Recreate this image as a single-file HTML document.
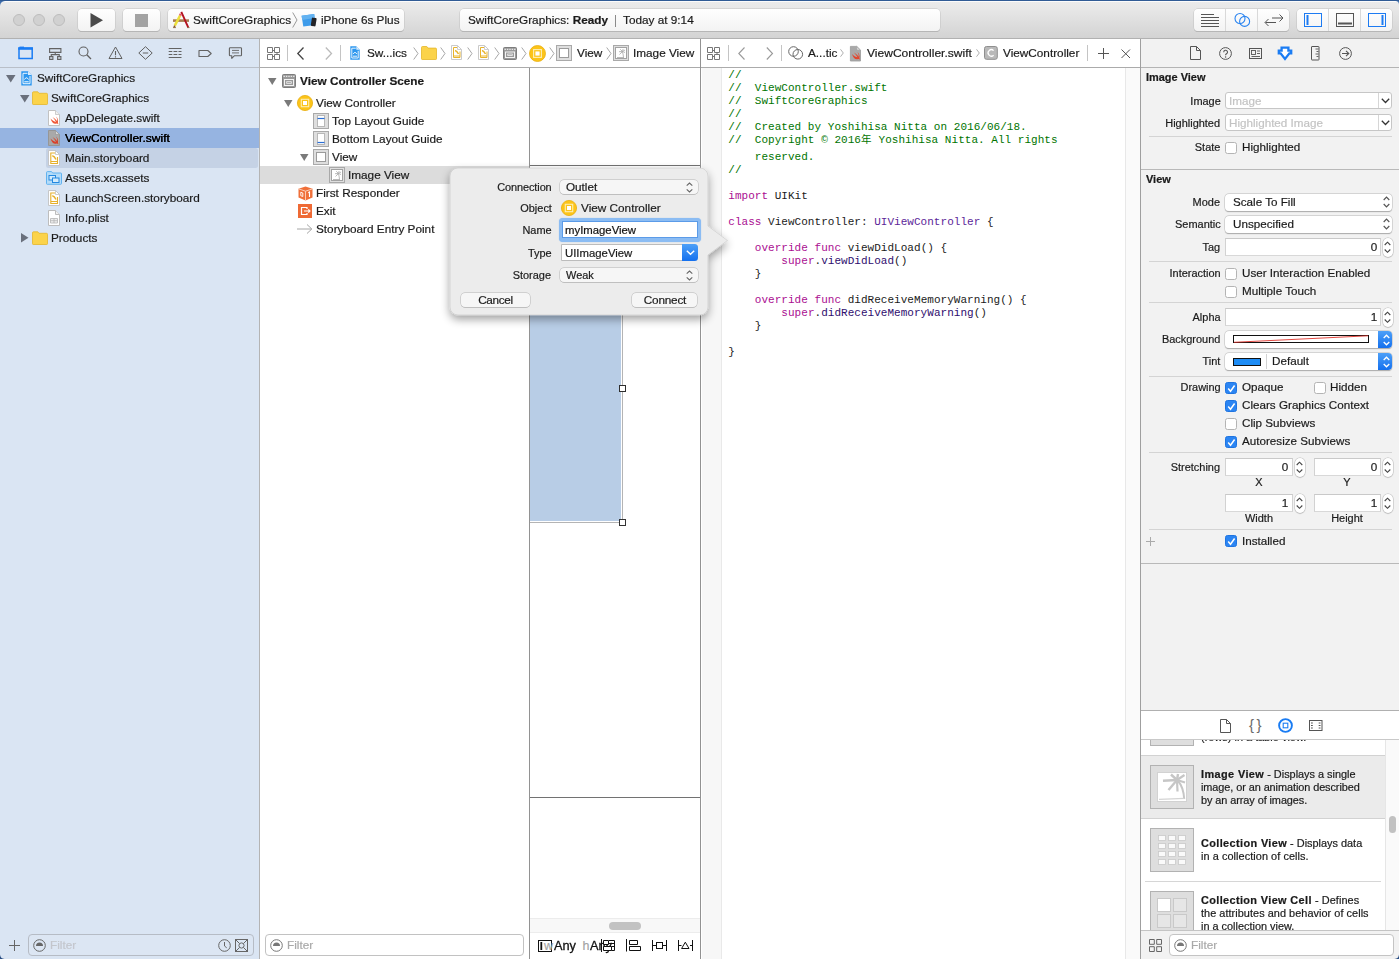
<!DOCTYPE html>
<html><head><meta charset="utf-8"><title>Xcode</title>
<style>
*{box-sizing:border-box;margin:0;padding:0}
html,body{width:1399px;height:959px;overflow:hidden;background:#fff}
body{font-family:"Liberation Sans","Noto Sans CJK JP",sans-serif;font-size:12px;color:#1a1a1a;position:relative}
.abs,.abs>*{position:absolute}
.t{position:absolute;white-space:pre;line-height:14px;height:14px;font-size:11px;letter-spacing:0;transform:scaleX(1.07);transform-origin:0 50%;-webkit-text-stroke:.18px}
.t.r{transform-origin:100% 50%}.t.ctr{transform-origin:50% 50%}
.b{font-weight:700;-webkit-text-stroke:.2px}
svg{position:absolute;overflow:visible}
/* title bar */
#title{position:absolute;left:0;top:0;width:1399px;height:39px;background:linear-gradient(#305b95 0,#305b95 1px,#fbfbfb 1px,#fbfbfb 2px,#ebebeb 2px,#e7e7e7 9px,#d3d3d3 38px,#b1b1b1 38px);}
.tbtn{position:absolute;top:9px;height:22px;border-radius:4px;background:linear-gradient(#fefefe,#f3f3f3);box-shadow:0 0 0 .5px #c2c2c2,0 1px 0 0 #aaa}
.light{position:absolute;top:14px;width:12px;height:12px;border-radius:6px;background:#d1d1d1;border:1px solid #bdbdbd}
/* panes */
#nav{position:absolute;left:0;top:39px;width:259px;height:920px;background:#dae5f3}
#navline{position:absolute;left:259px;top:39px;width:1px;height:920px;background:#b4b4b4}
.hline{position:absolute;height:1px;background:#c4c4c4}
.vline{position:absolute;width:1px;background:#c4c4c4}
#outline{position:absolute;left:260px;top:39px;width:269px;height:920px;background:#fff}
#canvas{position:absolute;left:529px;top:39px;width:172px;height:920px;background:#fff}
#editor{position:absolute;left:701px;top:39px;width:440px;height:920px;background:#fff}
#insp{position:absolute;left:1141px;top:39px;width:258px;height:920px;background:#f2f2f2}
.code{font-family:"Liberation Mono","Noto Sans CJK JP",monospace;font-size:11px;letter-spacing:.03px}
.c{color:#007400}.k{color:#aa0d91}.p{color:#5c2699}.m{color:#2e0d6e}

.t.l11{font-size:10px;transform:scaleX(1.095)}.t.l11.lib{transform:scaleX(1.09)}
.t.l12{font-size:11px;transform:scaleX(1.06)}
.cb{position:absolute;width:12px;height:12px;border-radius:2.500px;background:#fff;border:1px solid #b4b4b4}
.cb.on{background:#2b85f3;border-color:#1f74e0}
.fld{position:absolute;background:#fff;border:1px solid #c6c6c6;border-radius:3px}
.fld.sq{border-radius:0;border-color:#c9c9c9 #d2d2d2 #d8d8d8 #d2d2d2}
.pop{position:absolute;background:#fff;border-radius:4px;box-shadow:0 0 0 .5px #c0c0c0,0 .5px 1px 0 #999}
.stp{position:absolute;width:10px;height:19px;border-radius:5px;background:#fff;box-shadow:0 0 0 .5px #bdbdbd,0 .5px 1px 0 #999}
.bluebtn{position:absolute;border-radius:0 4px 4px 0;background:linear-gradient(#4da0f8,#1470ee)}

.lib{line-height:13px;height:auto;white-space:pre;letter-spacing:0}
.pop.g{background:#f6f6f6;box-shadow:0 0 0 .5px #b4b4b4,0 .5px .5px 0 #aaa}
</style></head><body>
<div id="title"></div>
<div id="nav"></div><div id="navline"></div>
<div id="outline"></div>
<div id="canvas"></div>
<div id="editor"></div>
<div id="insp"></div>
<!--TITLEBAR-->
<div class="light" style="left:13px"></div><div class="light" style="left:33px"></div><div class="light" style="left:53px"></div>
<div class="tbtn" style="left:78px;width:37px"></div>
<svg style="left:90px;top:13px" width="14" height="15"><path d="M0.5 0 L13 7.3 L0.5 14.6Z" fill="#4a4a4a"/></svg>
<div class="tbtn" style="left:123px;width:37px"></div>
<div style="position:absolute;left:135px;top:14px;width:13px;height:13px;background:#a3a3a3"></div>
<div class="tbtn" style="left:168px;width:236px"></div>
<!-- xcode app icon -->
<svg style="left:172px;top:11px" width="18" height="18" viewBox="0 0 18 18">
<path d="M1 9.600h16" stroke="#a97d50" stroke-width="2.600"/>
<path d="M9.300 .8L16.300 16.700" stroke="#b3121f" stroke-width="1.900" fill="none"/>
<path d="M8.200 4.300L2.800 14.600" stroke="#ecdf3c" stroke-width="2.500"/>
<path d="M8.900 2.900L8.100 4.500" stroke="#e0566a" stroke-width="2.500"/>
<path d="M2.800 14.600L2 16.500" stroke="#8a5a2c" stroke-width="1.600"/>
<path d="M1 16.600h3M15 16.600h2.500" stroke="#8e6a45" stroke-width=".9"/>
</svg>
<div class="t" style="left:193px;top:13px">SwiftCoreGraphics</div>
<svg style="left:292px;top:12px" width="6" height="16"><path d="M0.7 0.5 L5 8 L0.7 15.5" stroke="#9a9a9a" fill="none" stroke-width="1"/></svg>
<!-- simulator icon -->
<svg style="left:301px;top:12px" width="17" height="16" viewBox="0 0 17 16">
<path d="M.6 3.700L13.200 2L14.300 12.900L2.300 14.600Z" fill="#3d9bea"/><path d="M.6 3.700L13.200 2L13.600 6L1.200 8Z" fill="#62b2f1"/>
<rect x="10.300" y="5.800" width="4.800" height="8.400" rx="1" fill="#222226" transform="rotate(9 12.700 10)"/>
</svg>
<div class="t" style="left:321px;top:13px">iPhone 6s Plus</div>
<div class="tbtn" style="left:460px;width:480px"></div>
<div class="t" style="left:468px;top:13px">SwiftCoreGraphics: <span class="b">Ready</span></div>
<div style="position:absolute;left:615px;top:15px;width:1px;height:12px;background:#8a8a8a"></div>
<div class="t" style="left:623px;top:13px">Today at 9:14</div>
<!-- right segmented groups -->
<div class="tbtn" style="left:1194px;width:95px"></div>
<div style="position:absolute;left:1225px;top:9px;width:1px;height:22px;background:#d9d9d9"></div>
<div style="position:absolute;left:1257px;top:9px;width:1px;height:22px;background:#d9d9d9"></div>
<svg style="left:1200px;top:12px" width="20" height="16"><path d="M1 2.5h13M1 5.5h18M1 8.5h18M1 11.5h18M1 14.5h18" stroke="#555" stroke-width="1"/></svg>
<svg style="left:1232px;top:12px" width="20" height="16"><circle cx="8" cy="6.5" r="5" fill="none" stroke="#2a84f0" stroke-width="1.1"/><circle cx="12.6" cy="9.4" r="5" fill="none" stroke="#2a84f0" stroke-width="1.1"/></svg>
<svg style="left:1263px;top:12px" width="22" height="16"><path d="M9 6H19.5M16.5 2.5L20 6L16.5 9.5" stroke="#555" fill="none" stroke-width="1"/><path d="M13 10.5H2.5M5.5 7L2 10.5L5.5 14" stroke="#555" fill="none" stroke-width="1"/></svg>
<div class="tbtn" style="left:1297px;width:95px"></div>
<div style="position:absolute;left:1328px;top:9px;width:1px;height:22px;background:#d9d9d9"></div>
<div style="position:absolute;left:1360px;top:9px;width:1px;height:22px;background:#d9d9d9"></div>
<svg style="left:1304px;top:13px" width="18" height="14"><rect x=".5" y=".5" width="17" height="13" fill="none" stroke="#1d7bf2"/><path d="M3.5 2v10" stroke="#1d7bf2" stroke-width="2"/></svg>
<svg style="left:1336px;top:13px" width="18" height="14"><rect x=".5" y=".5" width="17" height="13" fill="none" stroke="#555"/><path d="M2 10.5h14" stroke="#555" stroke-width="2"/></svg>
<svg style="left:1368px;top:13px" width="18" height="14"><rect x=".5" y=".5" width="17" height="13" fill="none" stroke="#1d7bf2"/><path d="M14.5 2v10" stroke="#1d7bf2" stroke-width="2"/></svg>
<!--/TITLEBAR-->
<!--NAV-->
<!-- nav icon bar -->
<div class="hline" style="left:0;top:67px;width:259px;background:#b9bfc8"></div>
<svg style="left:18px;top:46px" width="16" height="14"><path d="M1 2v10.500h13.200V2z" fill="none" stroke="#1a7cf3" stroke-width="1.500"/><path d="M.3 1.500h14.600v2.300H.3z" fill="#1a7cf3"/><path d="M1.500 .6h4.500v1.500h-4.500z" fill="#1a7cf3"/></svg>
<svg style="left:48px;top:47px" width="15" height="13"><path d="M1.600 1.600h11.300v3.800H1.600zM1.600 9.600h3.300v2.800H1.600zM9.600 9.600h3.300v2.800H9.600zM7.250 5.400v2.300M3.250 9.600v-2h8v2" fill="none" stroke="#636363" stroke-width="1.100"/></svg>
<svg style="left:78px;top:46px" width="14" height="14"><circle cx="5.500" cy="5.500" r="4.500" fill="none" stroke="#606060" stroke-width="1.100"/><path d="M8.800 8.800L13 13" stroke="#606060" stroke-width="1.300"/></svg>
<svg style="left:108px;top:46px" width="15" height="14"><path d="M7.500 1L14 12.500H1z" fill="none" stroke="#606060" stroke-linejoin="round"/><path d="M7.500 5v4.200M7.500 10.200v1.300" stroke="#606060" stroke-width="1.100"/></svg>
<svg style="left:138px;top:46px" width="15" height="14"><path d="M7.500 .7L14.200 7L7.500 13.300L.8 7z" fill="none" stroke="#606060" stroke-linejoin="round"/><path d="M4.800 7h5.400" stroke="#606060"/></svg>
<svg style="left:168px;top:47px" width="15" height="12"><path d="M.7 1.500h12.800M.7 10.500h12.800M.7 4.500h3.600M5.500 4.500h3.800M10.500 4.500h3M.7 7.500h3.600M5.500 7.500h3.800M10.500 7.500h3" stroke="#636363" stroke-width="1"/></svg>
<svg style="left:198px;top:49px" width="15" height="9"><path d="M1 1.500h8.800l3.400 3l-3.400 3H1z" fill="none" stroke="#636363" stroke-width="1.100" stroke-linejoin="round"/></svg>
<svg style="left:228px;top:46px" width="15" height="14"><path d="M2.200 1.700h10.500q.8 0 .8.800v6.400q0 .8-.8.800H6.500L3.800 12.300V9.700H2.200q-.8 0-.8-.8V2.500q0-.8.800-.8z" fill="none" stroke="#636363" stroke-width="1.100" stroke-linejoin="round"/><path d="M4 4.400h7M4 6.900h7" stroke="#636363" stroke-width=".9"/></svg>
<!-- rows -->
<div style="position:absolute;left:0;top:128px;width:259px;height:20px;background:#96b4e1"></div>
<div style="position:absolute;left:46px;top:148px;width:212px;height:20px;background:#c5d2e5;border-radius:2.500px"></div>
<svg style="left:6px;top:75px" width="10" height="8"><path d="M0 0h9.500L4.750 7.500z" fill="#6a707c"/></svg>
<svg style="left:20px;top:95px" width="10" height="8"><path d="M0 0h9.500L4.750 7.500z" fill="#6a707c"/></svg>
<svg style="left:21px;top:233px" width="8" height="10"><path d="M0 0v9.500L7.500 4.750z" fill="#6a707c"/></svg>
<!-- project icon -->
<svg style="left:20.500px;top:71px" width="11" height="15"><path d="M.3.300h6.700l3.700 3.700v10.500H.3z" fill="#2c97ef"/><path d="M7 .3v3.700h3.700z" fill="#d9ecfc"/><path d="M2 2.300h4.500M2 2.300v10.400h7V5" fill="none" stroke="#fff" stroke-width=".9"/><path d="M3.500 8.500q2-3.500 4 0M3.300 10.800h4.400" fill="none" stroke="#fff" stroke-width="1"/></svg>
<!-- folders -->
<svg style="left:32px;top:91px" width="16" height="14"><path d="M.5 1.800q0-1 1-1h4.300l1.200 1.500h7.500q1 0 1 1v9.500q0 .7-.7.700H1.200q-.7 0-.7-.7z" fill="#fbd34a" stroke="#e4b62a" stroke-width=".8"/></svg>
<svg style="left:32px;top:231px" width="16" height="14"><path d="M.5 1.800q0-1 1-1h4.300l1.200 1.500h7.500q1 0 1 1v9.500q0 .7-.7.700H1.200q-.7 0-.7-.7z" fill="#fbd34a" stroke="#e4b62a" stroke-width=".8"/></svg>
<!-- swift files -->
<svg style="left:48px;top:110px" width="12" height="16"><path d="M.5.500h7l4 4v11H.5z" fill="#fff" stroke="#c2c2c2"/><path d="M7.500.5v4h4" fill="#f1f1f1" stroke="#c2c2c2" stroke-width=".8"/><path d="M2.300 8.200C4 10 6 11.200 7.800 11.600C7 10 5.800 8.400 4.300 6.800C6.300 8 7.900 9.500 8.900 11C9.300 9.600 8.900 7.900 7.700 6.200C9.700 7.800 10.300 10.300 9.700 12.200C10.100 12.800 10.200 13.500 10 14.100C9.500 13.300 8.900 13.100 8.300 13.300C6.100 14.300 3.500 12.500 2.300 8.200Z" fill="#f05a3a" transform="translate(.2 .3)"/></svg>
<svg style="left:48px;top:130px" width="12" height="16"><path d="M.5.500h7l4 4v11H.5z" fill="#a9a9a9" stroke="#969696"/><path d="M7.500.5v4h4z" fill="#d6d6d6" stroke="#969696" stroke-width=".7"/><path d="M2.300 8.200C4 10 6 11.200 7.800 11.600C7 10 5.800 8.400 4.300 6.800C6.300 8 7.900 9.500 8.900 11C9.300 9.600 8.900 7.900 7.700 6.200C9.700 7.800 10.300 10.300 9.700 12.200C10.100 12.800 10.200 13.500 10 14.100C9.500 13.300 8.900 13.100 8.300 13.300C6.100 14.300 3.500 12.500 2.300 8.200Z" fill="#d9412a" transform="translate(.2 .3)"/></svg>
<!-- storyboards -->
<svg style="left:48px;top:150px" width="12" height="16"><path d="M.5.500h7l4 4v11H.5z" fill="#fff" stroke="#c2c2c2" stroke-width=".9"/><path d="M7.500.5v4h4" fill="none" stroke="#c2c2c2" stroke-width=".8"/><path d="M7 3H2.800v10.500h6.700V7M2.800 11.500h6.700" fill="none" stroke="#e6b02a" stroke-width="1.100"/><path d="M4.300 5.800q2.200.4 3.700 3.700" fill="none" stroke="#e6b02a" stroke-width="1.500"/></svg>
<svg style="left:48px;top:190px" width="12" height="16"><path d="M.5.500h7l4 4v11H.5z" fill="#fff" stroke="#c2c2c2" stroke-width=".9"/><path d="M7.500.5v4h4" fill="none" stroke="#c2c2c2" stroke-width=".8"/><path d="M7 3H2.800v10.500h6.700V7M2.800 11.500h6.700" fill="none" stroke="#e6b02a" stroke-width="1.100"/><path d="M4.300 5.800q2.200.4 3.700 3.700" fill="none" stroke="#e6b02a" stroke-width="1.500"/></svg>
<!-- assets -->
<svg style="left:46px;top:171px" width="16" height="14"><path d="M.5 1.600q0-1 1-1h4l1.200 1.400h8q.8 0 .8.800v9.700q0 .8-.8.800H1.300q-.8 0-.8-.8z" fill="#b4dcf9" stroke="#56adee" stroke-width=".9"/><rect x="3" y="4.500" width="6.500" height="4.500" fill="#d4ecfc" stroke="#2488e0" stroke-width="1"/><rect x="6.500" y="7" width="6.500" height="4.500" fill="#d4ecfc" stroke="#2488e0" stroke-width="1"/></svg>
<!-- plist -->
<svg style="left:48px;top:210px" width="12" height="16"><path d="M.5.500h7l4 4v11H.5z" fill="#fff" stroke="#bdbdbd"/><path d="M7.500.5v4h4" fill="#f2f2f2" stroke="#bdbdbd"/><path d="M2.500 8.500h7v4.500h-7zM2.500 10.700h7M6 8.500v4.500" fill="#eee" stroke="#b5b5b5" stroke-width=".8"/></svg>
<div class="t" style="left:37px;top:71px">SwiftCoreGraphics</div>
<div class="t" style="left:51px;top:91px">SwiftCoreGraphics</div>
<div class="t" style="left:65px;top:111px">AppDelegate.swift</div>
<div class="t" style="left:65px;top:131px;color:#000;text-shadow:0 0 .3px #000;transform:scaleX(1.095)">ViewController.swift</div>
<div class="t" style="left:65px;top:151px">Main.storyboard</div>
<div class="t" style="left:65px;top:171px">Assets.xcassets</div>
<div class="t" style="left:65px;top:191px">LaunchScreen.storyboard</div>
<div class="t" style="left:65px;top:211px">Info.plist</div>
<div class="t" style="left:51px;top:231px">Products</div>
<!-- bottom filter -->
<svg style="left:9px;top:940px" width="12" height="12"><path d="M5.500 0v11M0 5.500h11" stroke="#666" stroke-width="1"/></svg>
<div style="position:absolute;left:28px;top:934px;width:226px;height:22px;border:1px solid #b6bcc5;border-radius:4px;background:#dce6f3"></div>
<svg style="left:33px;top:939px" width="13" height="13"><circle cx="6.500" cy="6.500" r="5.800" fill="none" stroke="#666" stroke-width="1"/><path d="M3 7a3.500 3.500 0 0 1 7 0z" fill="#666"/></svg>
<div class="t" style="left:50px;top:938px;color:#c3c6cc">Filter</div>
<svg style="left:218px;top:939px" width="13" height="13"><circle cx="6.500" cy="6.500" r="5.800" fill="none" stroke="#666" stroke-width="1"/><path d="M6.500 3v4l2.200 1.800" fill="none" stroke="#666" stroke-width="1"/></svg>
<svg style="left:235px;top:939px" width="13" height="13"><rect x=".5" y=".5" width="12" height="12" fill="none" stroke="#666"/><circle cx="6.500" cy="6.500" r="2.600" fill="none" stroke="#666"/><path d="M1 1l3.500 3.500M12 1L8.500 4.500M1 12l3.500-3.500M12 12L8.500 8.500" stroke="#666"/></svg>
<!--/NAV-->
<!--OUTLINE-->
<!-- jump bar (storyboard) -->
<div class="hline" style="left:260px;top:67px;width:441px;background:#ababab"></div>
<div class="vline" style="left:529px;top:68px;height:891px;background:#929292"></div>
<div class="vline" style="left:700px;top:39px;height:920px;background:#929292"></div>
<svg style="left:267px;top:47px" width="13" height="13"><path d="M.5.500h5v5h-5zM7.500.5h5v5h-5zM.5 7.500h5v5h-5zM7.500 7.500h5v5h-5zM5.500 3.500h2M10 5.500v2M5.500 9.500h2" fill="none" stroke="#767676" stroke-width="1"/></svg>
<div class="vline" style="left:287px;top:45px;height:16px;background:#c4c4c4"></div>
<svg style="left:297px;top:47px" width="8" height="13"><path d="M6.500.5L.8 6.500L6.500 12.500" fill="none" stroke="#444" stroke-width="1.300"/></svg>
<svg style="left:325px;top:47px" width="8" height="13"><path d="M.8.500L6.500 6.500L.8 12.500" fill="none" stroke="#bbb" stroke-width="1.300"/></svg>
<div class="vline" style="left:340px;top:45px;height:16px;background:#c4c4c4"></div>
<svg style="left:349.500px;top:46px" width="10" height="14"><path d="M.3.300h6l3.400 3.400v10H.3z" fill="#2c97ef"/><path d="M6.300 .3v3.400h3.400z" fill="#d9ecfc"/><path d="M1.800 2.200h4M1.800 2.200v9.800h6.400V4.800" fill="none" stroke="#fff" stroke-width=".9"/><path d="M3.200 8q1.800-3.200 3.600 0M3 10.200h4" fill="none" stroke="#fff" stroke-width=".9"/></svg>
<div class="t" style="left:367px;top:46px">Sw...ics</div>
<svg class="chev" style="left:413px;top:47px" width="6" height="13"><path d="M.7.500L5 6.500L.7 12.500" fill="none" stroke="#a8a8a8"/></svg>
<svg style="left:421px;top:46px" width="16" height="14"><path d="M.5 1.500q0-1 1-1h4.300l1.200 1.600h7.500q1 0 1 1v9.700q0 .7-.7.700H1.200q-.7 0-.7-.7z" fill="#fbd34a" stroke="#e4b62a" stroke-width=".8"/></svg>
<svg class="chev" style="left:440px;top:47px" width="6" height="13"><path d="M.7.500L5 6.500L.7 12.500" fill="none" stroke="#a8a8a8"/></svg>
<svg style="left:451px;top:45px" width="11" height="16"><path d="M.5.500h6l4 4v10H.5z" fill="#fff" stroke="#c4c4c4" stroke-width=".9"/><path d="M6.500.5v4h4" fill="none" stroke="#c4c4c4" stroke-width=".8"/><path d="M6 2.500H2.500v10h6.500V6.500M2.500 11h6.500" fill="none" stroke="#e8b32a" stroke-width="1"/><path d="M4 5.500q2 .3 3.500 3.500" fill="none" stroke="#e8b32a" stroke-width="1.500"/></svg>
<svg class="chev" style="left:467px;top:47px" width="6" height="13"><path d="M.7.500L5 6.500L.7 12.500" fill="none" stroke="#a8a8a8"/></svg>
<svg style="left:478px;top:45px" width="11" height="16"><path d="M.5.500h6l4 4v10H.5z" fill="#fff" stroke="#c4c4c4" stroke-width=".9"/><path d="M6.500.5v4h4" fill="none" stroke="#c4c4c4" stroke-width=".8"/><path d="M6 2.500H2.500v10h6.500V6.500M2.500 11h6.500" fill="none" stroke="#e8b32a" stroke-width="1"/><path d="M4 5.500q2 .3 3.500 3.500" fill="none" stroke="#e8b32a" stroke-width="1.500"/></svg>
<svg class="chev" style="left:494px;top:47px" width="6" height="13"><path d="M.7.500L5 6.500L.7 12.500" fill="none" stroke="#a8a8a8"/></svg>
<svg style="left:503px;top:47px" width="14" height="13"><rect x=".5" y=".5" width="13" height="12" rx="1" fill="#9a9a9a" stroke="#7d7d7d"/><path d="M1.500 2.300h11" stroke="#e8e8e8" stroke-dasharray="1.400 1" stroke-width="1.300"/><rect x="2.500" y="5" width="9" height="5.500" fill="#9a9a9a" stroke="#f4f4f4" stroke-width="1"/><rect x="4.700" y="7" width="4.600" height="1.500" fill="#9a9a9a" stroke="#f4f4f4" stroke-width=".8"/></svg>
<svg class="chev" style="left:521px;top:47px" width="6" height="13"><path d="M.7.500L5 6.500L.7 12.500" fill="none" stroke="#a8a8a8"/></svg>
<svg style="left:529px;top:45px" width="17" height="17"><circle cx="8.500" cy="8.500" r="8" fill="#fcc419" stroke="#e9ae10" stroke-width=".8"/><rect x="4.600" y="4.600" width="7.800" height="7.800" fill="none" stroke="#fdeeb4" stroke-width="1.100"/><rect x="6.400" y="6.400" width="4.200" height="4.200" fill="#fff"/></svg>
<svg class="chev" style="left:549px;top:47px" width="6" height="13"><path d="M.7.500L5 6.500L.7 12.500" fill="none" stroke="#a8a8a8"/></svg>
<svg style="left:556px;top:45px" width="16" height="16"><rect x=".5" y=".5" width="15" height="15" fill="#dedede" stroke="#a9a9a9"/><rect x="3.500" y="3.500" width="9" height="9" fill="#fff" stroke="#9b9b9b"/></svg>
<div class="t" style="left:577px;top:46px">View</div>
<svg class="chev" style="left:606px;top:47px" width="6" height="13"><path d="M.7.500L5 6.500L.7 12.500" fill="none" stroke="#a8a8a8"/></svg>
<svg style="left:613px;top:45px" width="16" height="16"><rect x=".5" y=".5" width="15" height="15" fill="#dedede" stroke="#a9a9a9"/><rect x="2.500" y="2.500" width="11" height="11" fill="#fff" stroke="#a2a2a2"/><path d="M10.500 12.500q-.2-3.500-1.200-6M9.500 6.500l-3.500.2M9.500 6.500l-3 3M9.500 6.500l-2.300-2.300M9.500 6.500l.6-2.500M9.500 6.500l2.500-1.500M9.500 6.500l2.500 1M4 12.500h7" stroke="#a8a8a8" stroke-width=".8" fill="none"/></svg>
<div class="t" style="left:633px;top:46px">Image View</div>
<!-- outline rows -->
<div style="position:absolute;left:260px;top:166px;width:269px;height:18px;background:#dcdcdc"></div>
<svg style="left:268px;top:78px" width="9" height="8"><path d="M0 0h8.500L4.250 7z" fill="#7a7a7a"/></svg>
<svg style="left:284px;top:100px" width="9" height="8"><path d="M0 0h8.500L4.250 7z" fill="#7a7a7a"/></svg>
<svg style="left:300px;top:154px" width="9" height="8"><path d="M0 0h8.500L4.250 7z" fill="#7a7a7a"/></svg>
<svg style="left:282px;top:74px" width="14" height="14"><rect x=".5" y=".5" width="13" height="13" rx="1" fill="#9a9a9a" stroke="#7d7d7d"/><path d="M1.500 2.300h11" stroke="#e8e8e8" stroke-dasharray="1.400 1" stroke-width="1.300"/><rect x="2.500" y="5.500" width="9" height="6" fill="#9a9a9a" stroke="#f4f4f4" stroke-width="1"/><rect x="4.700" y="7.700" width="4.600" height="1.600" fill="#9a9a9a" stroke="#f4f4f4" stroke-width=".8"/></svg>
<svg style="left:297px;top:95px" width="16" height="16"><circle cx="8" cy="8" r="7.600" fill="#fcc419" stroke="#e9ae10" stroke-width=".8"/><rect x="4.300" y="4.300" width="7.400" height="7.400" fill="none" stroke="#fdeeb4" stroke-width="1.100"/><rect x="6" y="6" width="4" height="4" fill="#fff"/></svg>
<svg style="left:313px;top:113px" width="16" height="16"><rect x=".5" y=".5" width="15" height="15" fill="#dedede" stroke="#a9a9a9"/><rect x="4.500" y="2.500" width="7" height="11" fill="#fff" stroke="#b8b8b8"/><path d="M4.500 5.500h7" stroke="#2a6fd6" stroke-width="1.200"/></svg>
<svg style="left:313px;top:131px" width="16" height="16"><rect x=".5" y=".5" width="15" height="15" fill="#dedede" stroke="#a9a9a9"/><rect x="4.500" y="2.500" width="7" height="11" fill="#fff" stroke="#b8b8b8"/><path d="M4.500 11.500h7" stroke="#2a6fd6" stroke-width="1.200"/></svg>
<svg style="left:313px;top:149px" width="16" height="16"><rect x=".5" y=".5" width="15" height="15" fill="#dedede" stroke="#a9a9a9"/><rect x="3.500" y="3.500" width="9" height="9" fill="#fff" stroke="#9b9b9b"/></svg>
<svg style="left:329px;top:167px" width="16" height="16"><rect x=".5" y=".5" width="15" height="15" fill="#dedede" stroke="#a9a9a9"/><rect x="2.500" y="2.500" width="11" height="11" fill="#fff" stroke="#a2a2a2"/><path d="M10.500 12.500q-.2-3.500-1.200-6M9.500 6.500l-3.500.2M9.500 6.500l-3 3M9.500 6.500l-2.300-2.300M9.500 6.500l.6-2.500M9.500 6.500l2.500-1.500M9.500 6.500l2.500 1M4 12.500h7" stroke="#a8a8a8" stroke-width=".8" fill="none"/></svg>
<!-- first responder cube -->
<svg style="left:298px;top:186px" width="15" height="15"><path d="M7.500.5L14.500 2.800V11.500L7.500 14.500L.5 11.500V2.800z" fill="#f0703a"/><path d="M.5 2.800L7.500 5.200L14.500 2.800M7.500 5.200V14.500" stroke="#fbd5c2" stroke-width=".9" fill="none"/><path d="M10.300 6.800l1.200-.8v5" stroke="#fff" stroke-width="1.100" fill="none"/><path d="M2.800 6.200v3.500l2 .8v-3.500z" stroke="#fff" stroke-width=".9" fill="none"/></svg>
<svg style="left:298px;top:204px" width="14" height="14"><rect width="14" height="14" fill="#ef6a35"/><path d="M9 5V3.500H3.500v7H9V9" fill="none" stroke="#fff" stroke-width="1.200"/><path d="M6 7h6M10.300 5.300L12 7l-1.700 1.700" fill="none" stroke="#fff" stroke-width="1.100"/></svg>
<svg style="left:297px;top:223px" width="16" height="12"><path d="M0 6h14.500M10 1.500L14.800 6L10 10.500" fill="none" stroke="#a6a6a6" stroke-width="1"/></svg>
<div class="t b" style="left:300px;top:74px">View Controller Scene</div>
<div class="t" style="left:316px;top:96px">View Controller</div>
<div class="t" style="left:332px;top:114px">Top Layout Guide</div>
<div class="t" style="left:332px;top:132px">Bottom Layout Guide</div>
<div class="t" style="left:332px;top:150px">View</div>
<div class="t" style="left:348px;top:168px">Image View</div>
<div class="t" style="left:316px;top:186px">First Responder</div>
<div class="t" style="left:316px;top:204px">Exit</div>
<div class="t" style="left:316px;top:222px">Storyboard Entry Point</div>
<!-- outline filter -->
<div style="position:absolute;left:265px;top:934px;width:259px;height:22px;border:1px solid #c2c2c2;border-radius:4px;background:#fff"></div>
<svg style="left:270px;top:939px" width="13" height="13"><circle cx="6.500" cy="6.500" r="5.800" fill="none" stroke="#777" stroke-width="1"/><path d="M3 7a3.500 3.500 0 0 1 7 0z" fill="#777"/></svg>
<div class="t" style="left:287px;top:938px;color:#a9a9a9">Filter</div>
<!--/OUTLINE-->
<!--CANVAS-->
<div class="hline" style="left:530px;top:165px;width:170px;background:#727272"></div>
<div style="position:absolute;left:530px;top:170px;width:91px;height:351px;background:#b8cde6"></div><div class="vline" style="left:622px;top:170px;height:353px;background:#b4b4b4"></div><div class="hline" style="left:530px;top:522px;width:92px;background:#b4b4b4"></div>
<div style="position:absolute;left:619px;top:385px;width:7px;height:7px;background:#fff;border:1px solid #2e2e2e"></div>
<div style="position:absolute;left:619px;top:519px;width:7px;height:7px;background:#fff;border:1px solid #333"></div>
<div class="hline" style="left:530px;top:797px;width:170px;background:#727272"></div>
<div style="position:absolute;left:530px;top:918px;width:170px;height:15px;background:#f8f8f8;border-top:1px solid #ececec;border-bottom:1px solid #ececec"></div>
<div style="position:absolute;left:609px;top:922px;width:32px;height:8px;border-radius:4px;background:#c2c2c2"></div>
<svg style="left:538px;top:940px" width="14" height="12"><rect x=".5" y=".5" width="13" height="11" fill="#fff" stroke="#111" stroke-width="1"/><path d="M3.300 2v8" stroke="#111" stroke-width="1.800"/></svg>
<div class="t" style="left:544px;top:939px;font-size:12.500px;color:#a4a4a4;transform:none">w</div>
<div class="t" style="left:554px;top:939px;font-size:13px;color:#111;transform:scaleX(.98);-webkit-text-stroke:.3px">Any</div>
<div class="t" style="left:582.500px;top:939px;font-size:12.500px;color:#a4a4a4;transform:none">h</div>
<div class="t" style="left:590px;top:939px;font-size:13px;color:#111;transform:scaleX(.98);-webkit-text-stroke:.3px">Any</div>
<svg style="left:600px;top:939px" width="16" height="13"><path d="M1.500 0v13" stroke="#111" stroke-width="1"/><path d="M3.500 1.500h5v4h-5zM3.500 7.500h8v4h-8z" fill="#fff" stroke="#111" stroke-width="1"/><path d="M9 1.500h5.500v10h-3" fill="none" stroke="#111" stroke-width="1"/><path d="M9 4.500h5.500M11.500 7.500h3" stroke="#111" stroke-width="1"/></svg>
<svg style="left:626px;top:939px" width="16" height="13"><path d="M.5 0v12.500" stroke="#111" stroke-width="1"/><path d="M3.500 1.500h8v4h-8zM3.500 7.500h11v4h-11z" fill="none" stroke="#111" stroke-width="1"/></svg>
<svg style="left:651px;top:939px" width="17" height="13"><path d="M1.500 1v11M15.500 1v11M1.500 6.500h3.500M11.500 6.500h4" stroke="#111" stroke-width="1"/><rect x="5.500" y="3.500" width="6" height="6" fill="none" stroke="#111" stroke-width="1"/></svg>
<svg style="left:677px;top:939px" width="17" height="13"><path d="M1.500 1v11M15.500 1v11M1.500 6.500h3M13 6.500h2.500" stroke="#111" stroke-width="1"/><path d="M8.300 3.200L12 9.500H4.600z" fill="none" stroke="#111" stroke-width="1"/></svg>
<!--/CANVAS-->
<!--EDITOR-->
<div class="hline" style="left:701px;top:67px;width:439px;background:#ababab"></div>
<div style="position:absolute;left:702px;top:68px;width:20px;height:891px;background:#f7f7f7;border-right:1px solid #e9e9e9"></div>
<div style="position:absolute;left:1125px;top:68px;width:15px;height:891px;background:#fafafa;border-left:1px solid #e8e8e8"></div>
<div class="vline" style="left:1140px;top:39px;height:920px;background:#9f9f9f"></div>
<svg style="left:707px;top:47px" width="13" height="13"><path d="M.5.500h5v5h-5zM7.500.5h5v5h-5zM.5 7.500h5v5h-5zM7.500 7.500h5v5h-5zM5.500 3.500h2M10 5.500v2M5.500 9.500h2" fill="none" stroke="#767676" stroke-width="1"/></svg>
<div class="vline" style="left:728px;top:45px;height:16px;background:#c4c4c4"></div>
<svg style="left:738px;top:47px" width="8" height="13"><path d="M6.500.5L.8 6.500L6.500 12.500" fill="none" stroke="#9a9a9a" stroke-width="1.100"/></svg>
<svg style="left:766px;top:47px" width="8" height="13"><path d="M.8.500L6.500 6.500L.8 12.500" fill="none" stroke="#9a9a9a" stroke-width="1.100"/></svg>
<div class="vline" style="left:781px;top:45px;height:16px;background:#c4c4c4"></div>
<svg style="left:788px;top:46px" width="16" height="14"><circle cx="5.500" cy="5.500" r="4.800" fill="none" stroke="#666" stroke-width="1"/><circle cx="9.800" cy="8.300" r="4.800" fill="none" stroke="#666" stroke-width="1"/></svg>
<div class="t" style="left:808px;top:46px">A...tic</div>
<svg style="left:840px;top:49px" width="5" height="9"><path d="M.5.300L3.300 4L.5 7.700" fill="none" stroke="#b0b0b0"/></svg>
<svg style="left:849.500px;top:45.500px" width="11" height="16"><path d="M.4.400h6.300l3.800 3.800v10.800H.4z" fill="#a9a9a9" stroke="#9a9a9a" stroke-width=".8"/><path d="M6.700.4v3.800h3.800z" fill="#dcdcdc" stroke="#9a9a9a" stroke-width=".6"/><path d="M2.300 8.200C4 10 6 11.200 7.800 11.600C7 10 5.800 8.400 4.300 6.800C6.300 8 7.900 9.500 8.900 11C9.300 9.600 8.900 7.900 7.700 6.200C9.700 7.800 10.300 10.300 9.700 12.200C10.100 12.800 10.200 13.500 10 14.100C9.500 13.300 8.900 13.100 8.300 13.300C6.100 14.300 3.500 12.500 2.300 8.200Z" fill="#e2452c" transform="translate(-.3 -.3)"/></svg>
<div class="t" style="left:866.500px;top:46px;transform:scaleX(1.095)">ViewController.swift</div>
<svg style="left:976px;top:49px" width="5" height="9"><path d="M.5.300L3.300 4L.5 7.700" fill="none" stroke="#b0b0b0"/></svg>
<svg style="left:984px;top:46px" width="14" height="14"><rect x=".5" y=".5" width="12.800" height="12.800" rx="2" fill="#b9b9b9" stroke="#8f8f8f"/><path d="M9.600 4.600a3.200 3.200 0 1 0 0 4.600" fill="none" stroke="#fff" stroke-width="1.300"/></svg>
<div class="t" style="left:1003px;top:46px">ViewController</div>
<div class="vline" style="left:1087px;top:45px;height:16px;background:#c4c4c4"></div>
<svg style="left:1098px;top:48px" width="12" height="12"><path d="M5.500 0v11M0 5.500h11" stroke="#555" stroke-width="1"/></svg>
<svg style="left:1121px;top:49px" width="10" height="10"><path d="M.5.500l8.500 8.500M9 .5L.5 9" stroke="#555" stroke-width="1"/></svg>
<!-- code -->
<div class="code" style="position:absolute;left:728.3px;top:69px;width:400px;line-height:13px;white-space:pre"><div class="c">//</div><div class="c">//  ViewController.swift</div><div class="c">//  SwiftCoreGraphics</div><div class="c">//</div><div class="c">//  Created by Yoshihisa Nitta on 2016/06/18.</div><div class="c" style="height:17px;line-height:13px">//  Copyright © 2016<span style="font-size:10.500px;display:inline-block;width:11px;line-height:13px;vertical-align:top;letter-spacing:0">年</span> Yoshihisa Nitta. All rights</div><div class="c">    reserved.</div><div class="c">//</div><div> </div><div><span class="k">import</span> UIKit</div><div> </div><div><span class="k">class</span> ViewController: <span class="p">UIViewController</span> {</div><div> </div><div>    <span class="k">override</span> <span class="k">func</span> viewDidLoad() {</div><div>        <span class="k">super</span>.<span class="m">viewDidLoad</span>()</div><div>    }</div><div> </div><div>    <span class="k">override</span> <span class="k">func</span> didReceiveMemoryWarning() {</div><div>        <span class="k">super</span>.<span class="m">didReceiveMemoryWarning</span>()</div><div>    }</div><div> </div><div>}</div></div>
<!--/EDITOR-->
<!--INSPECTOR-->
<div class="hline" style="left:1141px;top:67px;width:258px;background:#b4b4b4"></div>
<svg style="left:1190px;top:46px" width="11" height="14"><path d="M.5.500h6l4 4v9H.5z" fill="none" stroke="#555"/><path d="M6.500.5v4h4" fill="none" stroke="#555"/></svg>
<svg style="left:1219px;top:47px" width="13" height="13"><circle cx="6.500" cy="6.500" r="5.900" fill="none" stroke="#555"/><path d="M4.700 5.200a1.900 1.900 0 1 1 2.800 1.600q-.9.500-.9 1.500" fill="none" stroke="#555" stroke-width="1.100"/><circle cx="6.600" cy="10" r=".7" fill="#555"/></svg>
<svg style="left:1249px;top:48px" width="13" height="11"><rect x=".5" y=".5" width="12" height="10" fill="none" stroke="#555"/><rect x="2.500" y="2.500" width="4" height="4" fill="none" stroke="#555" stroke-width=".9"/><path d="M8 3h3M8 5.500h3M2.500 8.500h8.500" stroke="#555" stroke-width=".9"/></svg>
<svg style="left:1277px;top:46px" width="17" height="15"><path d="M4.600 1.600H11.400V4.600H14.200V7.400H12.400L8 13L3.600 7.400H1.800V4.600H4.600Z" fill="#fff" stroke="#1a7cf3" stroke-width="2.300" stroke-linejoin="miter"/></svg>
<svg style="left:1311px;top:46px" width="9" height="15"><rect x=".5" y=".5" width="7.500" height="13.500" rx=".5" fill="none" stroke="#555" stroke-width="1"/><path d="M4.500 3h3M5.500 5.500h2M4.500 8h3M5.500 10.500h2" stroke="#555" stroke-width=".9"/></svg>
<svg style="left:1339px;top:47px" width="13" height="13"><circle cx="6.500" cy="6.500" r="5.900" fill="none" stroke="#555"/><path d="M3 6.500h6.500M7 3.800L9.800 6.500L7 9.200" fill="none" stroke="#555" stroke-width="1.100"/></svg>
<div class="t b l11" style="left:1146px;top:71px">Image View</div>
<div class="t l11 r" style="right:178.5px;top:95px">Image</div>
<div class="fld" style="left:1225px;top:91.500px;width:167px;height:17.500px"></div>
<div class="vline" style="left:1378px;top:93px;height:15px;background:#d6d6d6"></div>
<svg style="left:1381px;top:98px" width="9" height="6"><path d="M.8.800L4.500 4.500L8.200.8" fill="none" stroke="#333" stroke-width="1.300"/></svg>
<div class="t l12" style="left:1229px;top:94px;color:#c3c3c3">Image</div>
<div class="t l11 r" style="right:178.5px;top:117px">Highlighted</div>
<div class="fld" style="left:1225px;top:113.500px;width:167px;height:17.500px"></div>
<div class="vline" style="left:1378px;top:115px;height:15px;background:#d6d6d6"></div>
<svg style="left:1381px;top:120px" width="9" height="6"><path d="M.8.800L4.500 4.500L8.200.8" fill="none" stroke="#333" stroke-width="1.300"/></svg>
<div class="t l12" style="left:1229px;top:116px;color:#c3c3c3">Highlighted Image</div>
<div class="hline" style="left:1149px;top:136px;width:243px;background:#d4d4d4"></div>
<div class="t l11 r" style="right:178.5px;top:141px">State</div>
<div class="cb" style="left:1225px;top:141.5px"></div>
<div class="t l12" style="left:1242px;top:140px">Highlighted</div>
<div class="hline" style="left:1141px;top:169px;width:258px;background:#b9b9b9"></div>
<div class="t b l11" style="left:1146px;top:173px">View</div>
<div class="t l11 r" style="right:178.5px;top:196px">Mode</div>
<div class="pop" style="left:1225px;top:193.5px;width:167px;height:17px"></div>
<div class="t l12" style="left:1233px;top:195px">Scale To Fill</div>
<svg style="left:1382.5px;top:196.0px" width="7" height="12"><path d="M.7 4L3.500 1.200L6.300 4M.7 8L3.500 10.800L6.300 8" fill="none" stroke="#555" stroke-width="1.2"/></svg>
<div class="t l11 r" style="right:178.5px;top:218px">Semantic</div>
<div class="pop" style="left:1225px;top:215.5px;width:167px;height:17px"></div>
<div class="t l12" style="left:1233px;top:217px">Unspecified</div>
<svg style="left:1382.5px;top:218.0px" width="7" height="12"><path d="M.7 4L3.500 1.200L6.300 4M.7 8L3.500 10.800L6.300 8" fill="none" stroke="#555" stroke-width="1.2"/></svg>
<div class="t l11 r" style="right:178.5px;top:241px">Tag</div>
<div class="fld sq" style="left:1225px;top:238px;width:156px;height:18px"></div>
<div class="t l12 r" style="right:22px;top:240px">0</div>
<div class="stp" style="left:1382.5px;top:237.5px"></div>
<svg style="left:1384.0px;top:240.5px" width="7" height="13"><path d="M.7 4L3.500 1.200L6.300 4M.7 8.500L3.500 11.300L6.300 8.500" fill="none" stroke="#444" stroke-width="1.100"/></svg>
<div class="hline" style="left:1149px;top:261px;width:243px;background:#d4d4d4"></div>
<div class="t l11 r" style="right:178.5px;top:267px">Interaction</div>
<div class="cb" style="left:1225px;top:267.5px"></div>
<div class="t l12" style="left:1242px;top:266px">User Interaction Enabled</div>
<div class="cb" style="left:1225px;top:285.5px"></div>
<div class="t l12" style="left:1242px;top:284px">Multiple Touch</div>
<div class="hline" style="left:1149px;top:302px;width:243px;background:#d4d4d4"></div>
<div class="t l11 r" style="right:178.5px;top:311px">Alpha</div>
<div class="fld sq" style="left:1225px;top:307.5px;width:156px;height:18px"></div>
<div class="t l12 r" style="right:22px;top:309.5px">1</div>
<div class="stp" style="left:1382.5px;top:307.5px"></div>
<svg style="left:1384.0px;top:310.5px" width="7" height="13"><path d="M.7 4L3.500 1.200L6.300 4M.7 8.500L3.500 11.300L6.300 8.500" fill="none" stroke="#444" stroke-width="1.100"/></svg>
<div class="t l11 r" style="right:178.5px;top:333px">Background</div>
<div class="pop" style="left:1225px;top:331px;width:167px;height:17px"></div>
<div class="bluebtn" style="left:1378px;top:331px;width:14px;height:17px"></div>
<svg style="left:1382.5px;top:333.5px" width="7" height="12"><path d="M.7 4L3.500 1.200L6.300 4M.7 8L3.500 10.800L6.300 8" fill="none" stroke="#fff" stroke-width="1.3"/></svg>
<svg style="left:1233px;top:335px" width="136" height="8"><rect x=".5" y=".5" width="135" height="7" fill="#fff" stroke="#111"/><path d="M1 7.300L135 .8" stroke="#e0332b" stroke-width=".9"/></svg>
<div class="t l11 r" style="right:178.5px;top:355px">Tint</div>
<div class="pop" style="left:1225px;top:353px;width:167px;height:17px"></div>
<div class="bluebtn" style="left:1378px;top:353px;width:14px;height:17px"></div>
<svg style="left:1382.5px;top:355.5px" width="7" height="12"><path d="M.7 4L3.500 1.200L6.300 4M.7 8L3.500 10.800L6.300 8" fill="none" stroke="#fff" stroke-width="1.3"/></svg>
<div style="position:absolute;left:1233px;top:357.500px;width:28px;height:8px;background:#1d8cf5;border:1px solid #111"></div>
<div class="vline" style="left:1266px;top:354px;height:15px;background:#d2d2d2"></div>
<div class="t l12" style="left:1272px;top:354px">Default</div>
<div class="hline" style="left:1149px;top:376px;width:243px;background:#d4d4d4"></div>
<div class="t l11 r" style="right:178.5px;top:381px">Drawing</div>
<div class="cb on" style="left:1225px;top:381.5px"></div><svg style="left:1227px;top:383.5px" width="9" height="9"><path d="M1.200 4.600L3.500 7.200L7.600 1.500" fill="none" stroke="#fff" stroke-width="1.500"/></svg>
<div class="t l12" style="left:1242px;top:380px">Opaque</div>
<div class="cb" style="left:1313.5px;top:381.5px"></div>
<div class="t l12" style="left:1330px;top:380px">Hidden</div>
<div class="cb on" style="left:1225px;top:399.5px"></div><svg style="left:1227px;top:401.5px" width="9" height="9"><path d="M1.200 4.600L3.500 7.200L7.600 1.500" fill="none" stroke="#fff" stroke-width="1.500"/></svg>
<div class="t l12" style="left:1242px;top:398px">Clears Graphics Context</div>
<div class="cb" style="left:1225px;top:417.5px"></div>
<div class="t l12" style="left:1242px;top:416px">Clip Subviews</div>
<div class="cb on" style="left:1225px;top:435.5px"></div><svg style="left:1227px;top:437.5px" width="9" height="9"><path d="M1.200 4.600L3.500 7.200L7.600 1.500" fill="none" stroke="#fff" stroke-width="1.500"/></svg>
<div class="t l12" style="left:1242px;top:434px">Autoresize Subviews</div>
<div class="hline" style="left:1149px;top:452px;width:243px;background:#d4d4d4"></div>
<div class="t l11 r" style="right:178.5px;top:461px">Stretching</div>
<div class="fld sq" style="left:1225px;top:457.5px;width:67.5px;height:18px"></div>
<div class="t l12 r" style="right:110.5px;top:459.5px">0</div>
<div class="stp" style="left:1294.5px;top:457.5px"></div>
<svg style="left:1296.0px;top:460.5px" width="7" height="13"><path d="M.7 4L3.500 1.200L6.300 4M.7 8.500L3.500 11.300L6.300 8.500" fill="none" stroke="#444" stroke-width="1.100"/></svg>
<div class="fld sq" style="left:1313.5px;top:457.5px;width:67.5px;height:18px"></div>
<div class="t l12 r" style="right:22.0px;top:459.5px">0</div>
<div class="stp" style="left:1382.5px;top:457.5px"></div>
<svg style="left:1384.0px;top:460.5px" width="7" height="13"><path d="M.7 4L3.500 1.200L6.300 4M.7 8.500L3.500 11.300L6.300 8.500" fill="none" stroke="#444" stroke-width="1.100"/></svg>
<div class="t l11 ctr" style="left:1228.500px;width:60px;text-align:center;top:476px">X</div><div class="t l11 ctr" style="left:1316.500px;width:60px;text-align:center;top:476px">Y</div>
<div class="fld sq" style="left:1225px;top:493.5px;width:67.5px;height:18px"></div>
<div class="t l12 r" style="right:110.5px;top:495.5px">1</div>
<div class="stp" style="left:1294.5px;top:493.5px"></div>
<svg style="left:1296.0px;top:496.5px" width="7" height="13"><path d="M.7 4L3.500 1.200L6.300 4M.7 8.500L3.500 11.300L6.300 8.500" fill="none" stroke="#444" stroke-width="1.100"/></svg>
<div class="fld sq" style="left:1313.5px;top:493.5px;width:67.5px;height:18px"></div>
<div class="t l12 r" style="right:22.0px;top:495.5px">1</div>
<div class="stp" style="left:1382.5px;top:493.5px"></div>
<svg style="left:1384.0px;top:496.5px" width="7" height="13"><path d="M.7 4L3.500 1.200L6.300 4M.7 8.500L3.500 11.300L6.300 8.500" fill="none" stroke="#444" stroke-width="1.100"/></svg>
<div class="t l11 ctr" style="left:1228.500px;width:60px;text-align:center;top:512px">Width</div><div class="t l11 ctr" style="left:1316.500px;width:60px;text-align:center;top:512px">Height</div>
<div class="hline" style="left:1149px;top:529px;width:243px;background:#d4d4d4"></div>
<svg style="left:1146px;top:537px" width="9" height="9"><path d="M4.500 0v9M0 4.500h9" stroke="#aaa" stroke-width="1"/></svg>
<div class="cb on" style="left:1225px;top:535px"></div><svg style="left:1227px;top:537px" width="9" height="9"><path d="M1.200 4.600L3.500 7.200L7.600 1.500" fill="none" stroke="#fff" stroke-width="1.500"/></svg>
<div class="t l12" style="left:1242px;top:534px">Installed</div>
<div class="hline" style="left:1141px;top:563px;width:258px;background:#b9b9b9"></div>
<!--/INSPECTOR-->
<!--LIB-->
<div class="hline" style="left:1141px;top:710px;width:258px;background:#b0b0b0"></div>
<div style="position:absolute;left:1141px;top:711px;width:258px;height:28px;background:#fff"></div>
<div class="hline" style="left:1141px;top:739px;width:258px;background:#c9c9c9"></div>
<svg style="left:1220px;top:719px" width="11" height="14"><path d="M.5.500h6l4 4v9H.5z" fill="none" stroke="#555"/><path d="M6.500.5v4h4" fill="none" stroke="#555"/></svg>
<div class="t" style="left:1249px;top:717px;font-size:15px;color:#6a6a6a;letter-spacing:2.500px;line-height:16px;height:16px;-webkit-text-stroke:0;transform:none">{}</div>
<svg style="left:1278px;top:718px" width="15" height="15"><circle cx="7.500" cy="7.500" r="6.400" fill="none" stroke="#1a7cf3" stroke-width="1.900"/><rect x="5.200" y="5.200" width="4.600" height="4.600" fill="none" stroke="#1a7cf3" stroke-width="1.100"/></svg>
<svg style="left:1309px;top:720px" width="14" height="11"><rect x=".5" y=".5" width="12.500" height="10" fill="none" stroke="#555"/><path d="M2 3h1.800M2 5.500h1.800M2 8h1.800M9.700 3h1.800M9.700 5.500h1.800M9.700 8h1.800" stroke="#555" stroke-width="1"/></svg>
<!-- list -->
<div style="position:absolute;left:1141px;top:740px;width:244px;height:190px;background:#fff;overflow:hidden">
 <div style="position:absolute;left:9px;top:-20px;width:44px;height:26px;background:#dedede;border:1px solid #b2b2b2"></div>
 <div class="t l11" style="left:60px;top:-9px;line-height:13px">(rows) in a table view.</div>
 <div style="position:absolute;left:0;top:15px;width:244px;height:64px;background:#ebebeb;border-top:1px solid #d2d2d2;border-bottom:1px solid #d2d2d2"></div>
 <div style="position:absolute;left:9px;top:25px;width:44px;height:44px;background:#dedede;border:1px solid #b2b2b2"></div>
 <svg style="left:16px;top:32px" width="30" height="30"><rect x=".5" y=".5" width="29" height="29" fill="#fff" stroke="#d2d2d2"/><g stroke="#c6c6c6" fill="none" stroke-linecap="butt"><path d="M20 8L6 8.700" stroke-width="2.600"/><path d="M20 8L11.500 18" stroke-width="2.400"/><path d="M20 8L20.500 19.500" stroke-width="2.200"/><path d="M20 8L14 2.500" stroke-width="2.400"/><path d="M20 8L21 2" stroke-width="2.400"/><path d="M20 8L27.500 3" stroke-width="2.200"/><path d="M20 8L28 10.500" stroke-width="2.200"/><path d="M21 9Q26.500 15 27.200 27" stroke-width="2"/><path d="M2 27.300Q15 27 27.500 26.300" stroke-width="1.300" stroke="#d4d4d4"/></g></svg>
 <div class="t l11 lib" style="left:60px;top:28px"><span class="b" style="letter-spacing:0.37px">Image View</span><span style="letter-spacing:-0.01px"> - Displays a single</span>
<span style="letter-spacing:-0.07px">image, or an animation described</span>
<span style="letter-spacing:-0.07px">by an array of images.</span></div>
 <div style="position:absolute;left:9px;top:88px;width:44px;height:44px;background:#dedede;border:1px solid #b2b2b2"></div>
 <svg style="left:17px;top:95px" width="30" height="31"><g fill="#fafafa" stroke="#c9c9c9" stroke-width=".8"><rect x=".5" y=".5" width="7" height="5"/><rect x="10.500" y=".5" width="7" height="5"/><rect x="20.500" y=".5" width="7" height="5"/><rect x=".5" y="8.500" width="7" height="5"/><rect x="10.500" y="8.500" width="7" height="5"/><rect x="20.500" y="8.500" width="7" height="5"/><rect x=".5" y="16.500" width="7" height="5"/><rect x="10.500" y="16.500" width="7" height="5"/><rect x="20.500" y="16.500" width="7" height="5"/><rect x=".5" y="24.500" width="7" height="5"/><rect x="10.500" y="24.500" width="7" height="5"/><rect x="20.500" y="24.500" width="7" height="5"/></g></svg>
 <div class="t l11 lib" style="left:60px;top:97px"><span class="b" style="letter-spacing:0.35px">Collection View</span><span style="letter-spacing:0px"> - Displays data</span>
<span style="letter-spacing:0.06px">in a collection of cells.</span></div>
 <div class="hline" style="left:4px;top:141px;width:236px;background:#d6d6d6"></div>
 <div style="position:absolute;left:9px;top:151px;width:44px;height:44px;background:#dedede;border:1px solid #b2b2b2"></div>
 <svg style="left:16px;top:158px" width="31" height="31"><rect x=".5" y=".5" width="13" height="13" fill="#fff" stroke="#c9c9c9"/><rect x="16.500" y=".5" width="13" height="13" fill="#e6e6e6" stroke="#c9c9c9"/><rect x=".5" y="16.500" width="13" height="13" fill="#e6e6e6" stroke="#c9c9c9"/><rect x="16.500" y="16.500" width="13" height="13" fill="#e6e6e6" stroke="#c9c9c9"/></svg>
 <div class="t l11 lib" style="left:60px;top:154px"><span class="b" style="letter-spacing:0.34px">Collection View Cell</span><span style="letter-spacing:0.08px"> - Defines</span>
<span style="letter-spacing:0.04px">the attributes and behavior of cells</span>
<span style="letter-spacing:0px">in a collection view.</span></div>
</div>
<div style="position:absolute;left:1385px;top:740px;width:14px;height:190px;background:#fafafa;border-left:1px solid #e6e6e6"></div>
<div style="position:absolute;left:1389px;top:816px;width:7px;height:17px;border-radius:3.500px;background:#c1c1c1"></div>
<div class="hline" style="left:1141px;top:930px;width:258px;background:#c4c4c4"></div>
<svg style="left:1149px;top:939px" width="13" height="13"><path d="M.5.500h4.800v4.800h-4.800zM7.700.5h4.800v4.800h-4.800zM.5 7.700h4.800v4.800h-4.800zM7.700 7.700h4.800v4.800h-4.800z" fill="none" stroke="#666" stroke-width="1"/></svg>
<div style="position:absolute;left:1169px;top:934px;width:225px;height:22px;border:1px solid #c4c4c4;border-radius:4px;background:#fff"></div>
<svg style="left:1174px;top:939px" width="13" height="13"><circle cx="6.500" cy="6.500" r="5.800" fill="none" stroke="#777" stroke-width="1"/><path d="M3 7a3.500 3.500 0 0 1 7 0z" fill="#777"/></svg>
<div class="t" style="left:1191px;top:938px;color:#a9a9a9">Filter</div>
<!--/LIB-->
<!--POPOVER-->
<svg style="left:430px;top:150px" width="320" height="200">
<defs><filter id="sh" x="-20%" y="-20%" width="140%" height="150%"><feGaussianBlur in="SourceAlpha" stdDeviation="5"/><feOffset dy="4"/><feComponentTransfer><feFuncA type="linear" slope=".38"/></feComponentTransfer><feMerge><feMergeNode/><feMergeNode in="SourceGraphic"/></feMerge></filter></defs>
<path filter="url(#sh)" d="M28 18h242a8 8 0 0 1 8 8v50l19.500 14.500L278 105v52a8 8 0 0 1-8 8H28a8 8 0 0 1-8-8V26a8 8 0 0 1 8-8z" fill="#ececec" stroke="#c8c8c8" stroke-width=".6"/>
</svg>
<div class="t l11 r" style="right:847.500px;top:181px;letter-spacing:-.1px">Connection</div>
<div class="pop g" style="left:559.500px;top:180px;width:138px;height:14px"></div>
<div class="t l11" style="left:566px;top:181px;transform:scaleX(1.17)">Outlet</div>
<svg style="left:686px;top:182px" width="7" height="11"><path d="M.7 3.600L3.500 1L6.300 3.600M.7 7.400L3.500 10L6.300 7.400" fill="none" stroke="#666" stroke-width="1.100"/></svg>
<div class="t l11 r" style="right:847.500px;top:202px">Object</div>
<svg style="left:561px;top:200px" width="16" height="16"><circle cx="8" cy="8" r="7.600" fill="#fcc419" stroke="#e9ae10" stroke-width=".8"/><rect x="4.300" y="4.300" width="7.400" height="7.400" fill="none" stroke="#fdeeb4" stroke-width="1.100"/><rect x="6" y="6" width="4" height="4" fill="#fff"/></svg>
<div class="t" style="left:581px;top:201px">View Controller</div>
<div class="t l11 r" style="right:847.500px;top:224px">Name</div>
<div style="position:absolute;left:558.500px;top:217.500px;width:142px;height:24px;border-radius:4px;background:#8bbcf3;box-shadow:0 0 1px #8bbcf3"></div>
<div style="position:absolute;left:561.500px;top:221px;width:136px;height:17px;background:#fff;border:.5px solid #5b9be8"></div>
<div class="t l11" style="left:565px;top:224px;color:#111;transform:scaleX(1.135)">myImageView</div>
<div class="t l11 r" style="right:847.500px;top:247px">Type</div>
<div style="position:absolute;left:561px;top:244px;width:137px;height:17px;background:#fff;border:1px solid #bcbcbc;border-radius:0 4px 4px 0"></div>
<div class="bluebtn" style="left:682px;top:244px;width:16px;height:17px;border-radius:0 3.500px 3.500px 0"></div>
<svg style="left:685.500px;top:250px" width="9" height="6"><path d="M.8.800L4.500 4.300L8.200.8" fill="none" stroke="#fff" stroke-width="1.400"/></svg>
<div class="t l11" style="left:565px;top:247px;transform:scaleX(1.135)">UIImageView</div>
<div class="t l11 r" style="right:847.500px;top:269px">Storage</div>
<div class="pop g" style="left:559.500px;top:268px;width:138px;height:14px"></div>
<div class="t l11" style="left:566px;top:269px">Weak</div>
<svg style="left:686px;top:270px" width="7" height="11"><path d="M.7 3.600L3.500 1L6.300 3.600M.7 7.400L3.500 10L6.300 7.400" fill="none" stroke="#666" stroke-width="1.100"/></svg>
<div class="pop g" style="left:460.500px;top:292.500px;width:69px;height:14.500px"></div>
<div class="t ctr" style="left:460.500px;width:69px;text-align:center;top:293px;letter-spacing:-.3px">Cancel</div>
<div class="pop g" style="left:631.500px;top:292.500px;width:65.500px;height:14.500px"></div>
<div class="t ctr" style="left:631.500px;width:66px;text-align:center;top:293px;letter-spacing:-.2px">Connect</div>
<!--/POPOVER-->
<svg style="left:0;top:0" width="1399" height="959" pointer-events="none"><path d="M0 1V6Q.2 1.300 5 1z" fill="#3d6cab"/><path d="M1399 1V4.500Q1398.800 1.200 1395.500 1z" fill="#4272b0"/><path d="M0 959V954.500Q.3 958.700 4.500 959z" fill="#2b4f85"/><path d="M1399 959V954.500Q1398.700 958.700 1394.500 959z" fill="#2b4f85"/></svg>

</body></html>
